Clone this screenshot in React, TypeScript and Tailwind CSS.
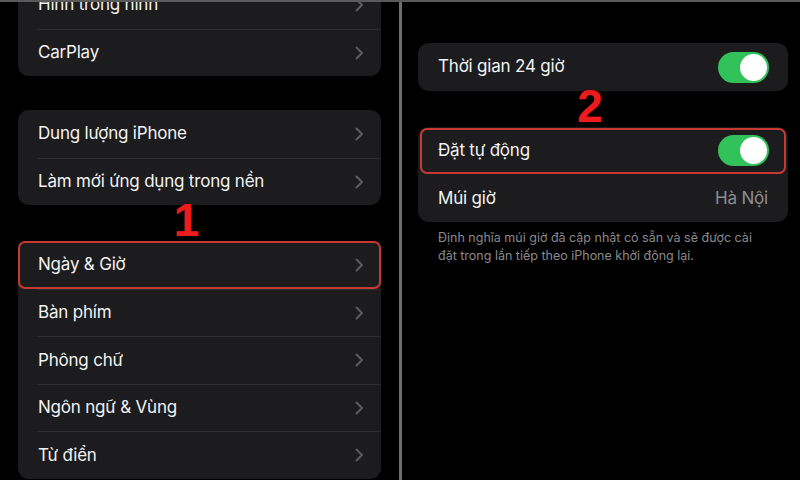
import React from "react";

const font = { fontFamily: "Inter, 'Noto Sans', sans-serif" };

const Chevron = () => (
  <svg width="9" height="14" viewBox="0 0 9 14" fill="none">
    <path d="M1.5 1.5 L7 7 L1.5 12.5" stroke="#5c5c60" strokeWidth="2" strokeLinecap="round" strokeLinejoin="round" />
  </svg>
);

const Toggle = () => (
  <div className="w-[51px] h-[31px] rounded-full bg-[#32c25a] flex items-center justify-end pr-[2px]">
    <div className="w-[27px] h-[27px] rounded-full bg-white" />
  </div>
);

type Row = { label: string; highlight?: boolean; right?: React.ReactNode };

const Card = ({ rows, pr = "pr-[17px]" }: { rows: Row[]; pr?: string }) => (
  <div className="bg-[#1c1c1e] rounded-[11px]">
    {rows.map((row, index) => (
      <div key={index} className="relative">
        {index > 0 && <div className="ml-[19px] h-px bg-[#2e2e31]" />}
        <div
          className={`${index > 0 ? "h-[46.5px]" : "h-[47.5px]"} flex items-center justify-between pl-[20px] ${pr}`}
        >
          <span className="text-[17px] text-[#f2f2f2] tracking-[-0.2px]">{row.label}</span>
          {row.right ?? <Chevron />}
        </div>
        {row.highlight && (
          <div className="absolute inset-x-0 top-0 bottom-0 border-2 border-[#c63a33] rounded-[7px]" />
        )}
      </div>
    ))}
  </div>
);

const Marker = ({ n }: { n: string }) => (
  <div className="h-[36px] flex justify-center pr-[26px]">
    <span
      className="text-[46px] leading-[30px] font-bold text-[#ec1c1c]"
      style={{ fontFamily: "'Liberation Sans', Arial, sans-serif", textShadow: "0 0 2px #400" }}
    >
      {n}
    </span>
  </div>
);

export default function App() {
  return (
    <div className="w-[800px] h-[480px] overflow-hidden bg-black border-t-2 border-[#5a5a5a] flex" style={font}>
      <div className="w-[399px] px-[18px] mt-[-21px]">
        <Card rows={[{ label: "Hình trong hình" }, { label: "CarPlay" }]} />
        <div className="h-[34px]" />
        <Card rows={[{ label: "Dung lượng iPhone" }, { label: "Làm mới ứng dụng trong nền" }]} />
        <Marker n="1" />
        <Card
          rows={[
            { label: "Ngày & Giờ", highlight: true },
            { label: "Bàn phím" },
            { label: "Phông chữ" },
            { label: "Ngôn ngữ & Vùng" },
            { label: "Từ điển" },
          ]}
        />
      </div>
      <div className="w-[3px] bg-[#6e6e6e]" />
      <div className="flex-1 pl-[16px] pr-[12px] pt-[41px]">
        <div className="bg-[#1c1c1e] rounded-[11px] h-[48px] flex items-center justify-between pl-[20px] pr-[19px]">
          <span className="text-[17px] text-[#f2f2f2] tracking-[-0.2px]">Thời gian 24 giờ</span>
          <Toggle />
        </div>
        <Marker n="2" />
        <div className="bg-[#1c1c1e] rounded-[11px]">
          <div className="relative h-[47.5px] flex items-center justify-between pl-[20px] pr-[19px]">
            <span className="text-[17px] text-[#f2f2f2] tracking-[-0.2px]">Đặt tự động</span>
            <Toggle />
            <div className="absolute inset-x-[2px] top-[1px] bottom-[1px] border-2 border-[#c63a33] rounded-[7px]" />
          </div>
          <div className="h-[47.5px] flex items-center justify-between pl-[20px] pr-[20px]">
            <span className="text-[17px] text-[#f2f2f2] tracking-[-0.2px]">Múi giờ</span>
            <span className="text-[17px] text-[#8e8e93] tracking-[-0.2px]">Hà Nội</span>
          </div>
        </div>
        <p className="pl-[20px] pr-[20px] pt-[7px] text-[12.5px] leading-[18px] text-[#8a8a8e]">
          Định nghĩa múi giờ đã cập nhật có sẵn và sẽ được cài đặt trong lần tiếp theo iPhone khởi động lại.
        </p>
      </div>
    </div>
  );
}
